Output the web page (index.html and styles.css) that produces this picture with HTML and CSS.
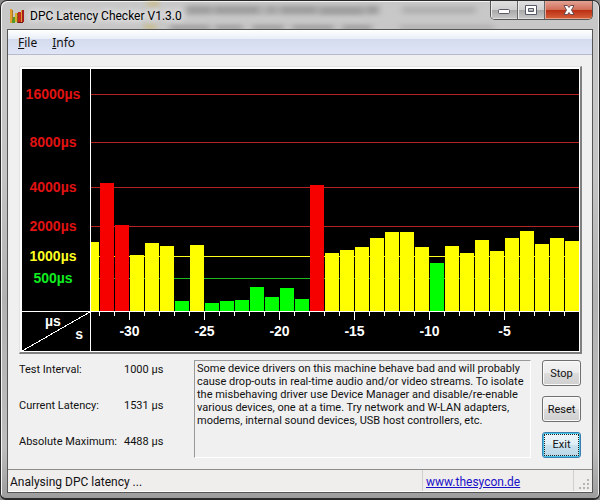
FILE: index.html
```html
<!DOCTYPE html>
<html lang="en">
<head>
<meta charset="utf-8">
<title>DPC Latency Checker V1.3.0</title>
<link rel="stylesheet" href="styles.css">
</head>
<body>
<div class="window">
  <header class="titlebar">
    <svg class="glass" aria-hidden="true" width="600" height="29" viewBox="0 0 600 29">
      <defs><filter id="soft" x="-10%" y="-100%" width="120%" height="300%"><feGaussianBlur stdDeviation="3 2"/></filter></defs>
      <g filter="url(#soft)" fill="#777" opacity=".5">
        <rect x="186" y="5" width="193" height="10" opacity=".5"/>
        <rect x="186" y="6" width="25" height="8"/><rect x="215" y="6" width="44" height="8"/><rect x="268" y="6" width="7" height="8"/><rect x="281" y="6" width="35" height="8"/><rect x="320" y="7" width="43" height="8"/><rect x="367" y="6" width="12" height="8"/>
        <rect x="170" y="25" width="40" height="5"/><rect x="215" y="25" width="28" height="5"/><rect x="252" y="25" width="32" height="5"/><rect x="292" y="25" width="42" height="5"/><rect x="342" y="25" width="30" height="5"/>
      </g>
      <g filter="url(#soft)" fill="#888" opacity=".35"><rect x="402" y="6" width="74" height="8"/><rect x="400" y="25" width="94" height="5"/></g>
      <g filter="url(#soft)" fill="#c9b35a" opacity=".5"><rect x="147" y="1" width="12" height="6"/><rect x="144" y="24" width="12" height="6"/></g>
    </svg>
    <svg class="app-icon" aria-hidden="true" width="16" height="16" viewBox="0 0 16 16">
      <path fill="#e0a030" d="M1 1h2v14H1z"/><path fill="#a8742a" d="M3 2h1v12H3z"/>
      <path fill="#4f9a2a" d="M4 9h2v6H3v-3h1z"/><path fill="#d8b02c" d="M6 5h2v9H6z"/><path fill="#8d5a1c" d="M8 5h1v10H8z"/>
      <path fill="#c22a22" d="M9 4h3v10H9z"/><path fill="#e0a030" d="M12 2h1v12h-1z"/><path fill="#a51d1a" d="M13 2h2v12h-2z"/><path fill="#6e1714" d="M9 14h5v1H9z"/>
    </svg>
    <h1 class="title">DPC Latency Checker V1.3.0</h1>
    <div class="controls">
      <button class="ctl" aria-label="Minimize"><svg width="14" height="14" viewBox="0 0 14 14"><rect x="1.5" y="6.5" width="11" height="4" rx="1" fill="#fff" stroke="#555a66"/></svg></button>
      <button class="ctl" aria-label="Maximize"><svg width="14" height="14" viewBox="0 0 14 14"><path fill="#fff" stroke="#555a66" fill-rule="evenodd" d="M1.500 2.500h11v9h-11zM4.500 5.500v3h5v-3z"/></svg></button>
      <button class="ctl close" aria-label="Close"><svg width="14" height="14" viewBox="0 0 14 14"><path fill="#fff" stroke="#6b4a50" d="M2 2.500h3.500L7 4.500l1.500-2H12L9.500 7l2.500 4.500H8.500L7 9.500l-1.500 2H2L4.500 7z"/></svg></button>
    </div>
  </header>
  <main class="client">
    <nav class="menu"><a href="#"><u>F</u>ile</a><a href="#"><u>I</u>nfo</a></nav>
    <div class="content">
      <section class="chart" aria-label="DPC latency over time">
        <div class="upper">
          <div class="level red">16000µs</div><div class="line red"></div>
          <div class="level red">8000µs</div><div class="line red"></div>
          <div class="level red">4000µs</div><div class="line red"></div>
          <div class="level red">2000µs</div><div class="line red"></div>
          <div class="level yellow">1000µs</div><div class="line yellow"></div>
          <div class="level green">500µs</div><div class="line green"></div>
          <div class="bars" id="bars"></div>
        </div>
        <div class="lower">
          <div class="units">
            <svg class="diagonal" aria-hidden="true" viewBox="0 0 68 39" preserveAspectRatio="none"><path d="M0 39L68 0" stroke="#fff" shape-rendering="crispEdges"/></svg>
            <span class="unit-y">µs</span><span class="unit-x">s</span>
          </div>
          <div class="ticks" id="ticks"></div>
        </div>
      </section>
      <section class="details">
        <dl class="stats">
          <dt>Test Interval:</dt><dd>1000 µs</dd>
          <dt>Current Latency:</dt><dd>1531 µs</dd>
          <dt>Absolute Maximum:</dt><dd>4488 µs</dd>
        </dl>
        <textarea class="message" readonly aria-label="Result">Some device drivers on this machine behave bad and will probably
cause drop-outs in real-time audio and/or video streams. To isolate
the misbehaving driver use Device Manager and disable/re-enable
various devices, one at a time. Try network and W-LAN adapters,
modems, internal sound devices, USB host controllers, etc.</textarea>
        <div class="actions">
          <button class="btn">Stop</button>
          <button class="btn">Reset</button>
          <button class="btn default"><span>Exit</span></button>
        </div>
      </section>
    </div>
    <footer class="status">
      <span class="status-text">Analysing DPC latency ...</span>
      <span class="status-link"><a href="#">www.thesycon.de</a></span>
      <span class="grip"><svg aria-hidden="true" width="12" height="12" viewBox="0 0 12 12"><path fill="#b4b4b4" d="M8 1h2v2H8zM8 5h2v2H8zM4 5h2v2H4zM8 9h2v2H8zM4 9h2v2H4zM0 9h2v2H0z"/></svg></span>
    </footer>
  </main>
</div>
<script src="chart.js"></script>
</body>
</html>
```
FILE: styles.css
```css
* { box-sizing: border-box; }
body {
  margin: 0;
  background: #8a8a8a;
  font: 11px/13px Roboto, sans-serif;
  color: #111;
}
.window {
  display: flex;
  flex-direction: column;
  min-height: 100vh;
  padding: 0 6px 5px;
  border: 1px solid #2a2a2a;
  border-bottom-width: 2px;
  border-radius: 7px 7px 6px 6px;
  box-shadow: inset 1px 1px #f4f4f4, inset -1px 0 #e8e8e8;
  background: linear-gradient(#c8c8c8, #c4c4c4 35%, #b2b2b2 60%, #bdbdbd 90%, #9d9d9d);
}
.titlebar {
  position: relative;
  display: flex;
  align-items: flex-start;
  height: 28px;
}
.glass { position: absolute; left: -7px; top: -1px; }
.app-icon { position: relative; margin: 7px 5px 0 2px; }
.title {
  position: relative;
  flex: 1;
  margin: 6px 0 0;
  font: 12px/18px Roboto, sans-serif;
  color: #000;
  text-shadow: 0 0 6px #fff, 0 0 8px #fff;
}
.controls {
  position: relative;
  display: flex;
  border: 1px solid #555;
  border-top: 0;
  border-radius: 0 0 5px 5px;
  overflow: hidden;
}
.ctl {
  display: flex;
  align-items: center;
  justify-content: center;
  width: 27px;
  height: 18px;
  padding: 0;
  border: 0;
  border-right: 1px solid #666;
  background: linear-gradient(#e0e0e0, #cfcfcf 48%, #a9a9a9 52%, #c9c9c9);
  box-shadow: inset 1px 0 #ececec, inset 0 -1px #ddd;
}
.ctl.close {
  width: 47px;
  border: 0;
  background: linear-gradient(#e2a294, #d26e58 48%, #bb2f14 52%, #d7623a);
  box-shadow: inset 1px 0 #e5a99c, inset 0 -1px #e9a184;
}
.client {
  flex: 1;
  display: flex;
  flex-direction: column;
  border: 1px solid #555;
  background: #f0f0f0;
}
.menu {
  display: flex;
  gap: 15px;
  height: 25px;
  padding: 4px 10px;
  border-bottom: 1px solid #b6bccc;
  background: linear-gradient(#fff, #e9eef8 9px, #d4dbee 9px, #dfe5f5);
  font: 12px/18px "Noto Sans", sans-serif;
}
.menu a { color: #111; text-decoration: none; }
.content { flex: 1; padding: 11px 10px 0 11px; }
.chart {
  padding: 2px 1px 1px 2px;
  border: 1px solid #e3e3e3;
  border-right: 2px solid #808080;
  border-bottom: 2px solid #808080;
  background: #000;
  box-shadow: inset 2px 2px #fff, inset -1px -1px #fff;
  color: #fff;
  font: bold 14px/18px "Liberation Sans", sans-serif;
}
.upper {
  display: grid;
  grid-template-columns: 68px 1fr;
  grid-template-rows: 34px 48px 45px 39px 30px 22px 24px;
  border-bottom: 1px solid #fff;
}
.level { grid-column: 1; align-self: end; padding-right: 6px; text-align: center; }
.line { grid-column: 2; align-self: end; height: 1px; margin-bottom: 8px; background: currentColor; }
.level:nth-child(1), .line:nth-child(2) { grid-row: 1; }
.level:nth-child(3), .line:nth-child(4) { grid-row: 2; }
.level:nth-child(5), .line:nth-child(6) { grid-row: 3; }
.level:nth-child(7), .line:nth-child(8) { grid-row: 4; }
.level:nth-child(9), .line:nth-child(10) { grid-row: 5; }
.level:nth-child(11), .line:nth-child(12) { grid-row: 6; }
.red { color: #e01212; }
.line.red { color: #b52222; }
.yellow { color: #ffff20; }
.green { color: #10ee20; }
.line.green { color: #20b820; }
.bars {
  grid-column: 2;
  grid-row: 1 / -1;
  display: flex;
  justify-content: flex-end;
  align-items: flex-end;
  gap: 1px;
  border-left: 1px solid #fff;
  overflow: hidden;
}
.bar { flex: none; width: 14px; }
.bar.over { background: #f60000; }
.bar.mid { background: #ff0; }
.bar.low { background: #0f0; }
.lower { display: grid; grid-template-columns: 69px 1fr; height: 39px; }
.units { position: relative; border-right: 1px solid #fff; }
.diagonal { position: absolute; width: 100%; height: 100%; }
.unit-y, .unit-x { position: absolute; }
.unit-y { left: 23px; top: 0; }
.unit-x { right: 7px; top: 13px; }
.ticks { display: flex; justify-content: flex-end; padding-right: 7px; overflow: hidden; }
.tick {
  flex: none;
  display: flex;
  flex-direction: column;
  align-items: center;
  width: 15px;
}
.tick::before { content: ""; flex: none; width: 1px; height: 4px; background: #fff; }
.tick.major::before { height: 8px; }
.tick span { margin-top: 2px; }
.details { display: flex; align-items: flex-start; margin-top: 6px; }
.stats {
  display: grid;
  grid-template-columns: 105px 70px;
  row-gap: 23px;
  margin: 3px 0 0;
}
.stats dd { margin: 0; }
.message {
  flex: 1;
  min-width: 0;
  height: 98px;
  padding: 1px 2px;
  border: 1px solid #999;
  border-right-color: #fff;
  border-bottom-color: #fff;
  outline: 0;
  resize: none;
  overflow: hidden;
  background: #f0f0f0;
  color: inherit;
  font: inherit;
  white-space: pre;
}
.actions { display: flex; flex-direction: column; gap: 10px; margin: 0 1px 0 11px; }
.btn {
  width: 39px;
  height: 26px;
  padding: 0;
  border: 1px solid #707070;
  border-radius: 3px;
  background: linear-gradient(#f4f4f4, #ececec 48%, #dcdcdc 52%, #cfcfcf);
  box-shadow: inset 0 0 0 1px #fafafa;
  color: #111;
  font: inherit;
}
.btn.default {
  border-color: #3c7fb1;
  background: linear-gradient(#eef5fa, #dfeef6 48%, #cbe2ee 52%, #b9d6e6);
  box-shadow: inset 0 0 0 1px #45c5e8;
}
.btn.default span { display: block; margin: 1px; border: 1px dotted #222; line-height: 20px; }
.status {
  display: flex;
  height: 23px;
  border-top: 1px solid #8c8c8c;
  border-bottom: 1px solid #fff;
  background: #f0eded;
  font-size: 12px;
  line-height: 25px;
}
.status-text { flex: 1; padding-left: 2px; }
.status-link { width: 151px; padding-left: 3px; border-left: 1px solid #cfcfcf; }
.status-link a { color: #1a10c8; }
.grip {
  display: flex;
  align-items: flex-end;
  justify-content: flex-end;
  width: 19px;
  padding: 0 1px 1px 0;
  border-left: 1px solid #cfcfcf;
}
```
FILE: chart.js
```js
// Bar heights in pixels, oldest sample first.
const samples = [69,128,86,56,68,65,10,66,8,10,11,24,14,23,12,126,58,61,64,73,79,79,64,48,65,58,71,60,73,80,67,73,70];
const bars = document.getElementById("bars");
for (const h of samples) {
  const bar = document.createElement("div");
  bar.className = "bar " + (h > 84 ? "over" : h > 54 ? "mid" : "low");
  bar.style.height = h + "px";
  bars.append(bar);
}
const ticks = document.getElementById("ticks");
for (let t = -32; t < 0; t++) {
  const tick = document.createElement("div");
  tick.className = "tick";
  if (t % 5 === 0) {
    tick.classList.add("major");
    const label = document.createElement("span");
    label.textContent = t;
    tick.append(label);
  }
  ticks.append(tick);
}
```
